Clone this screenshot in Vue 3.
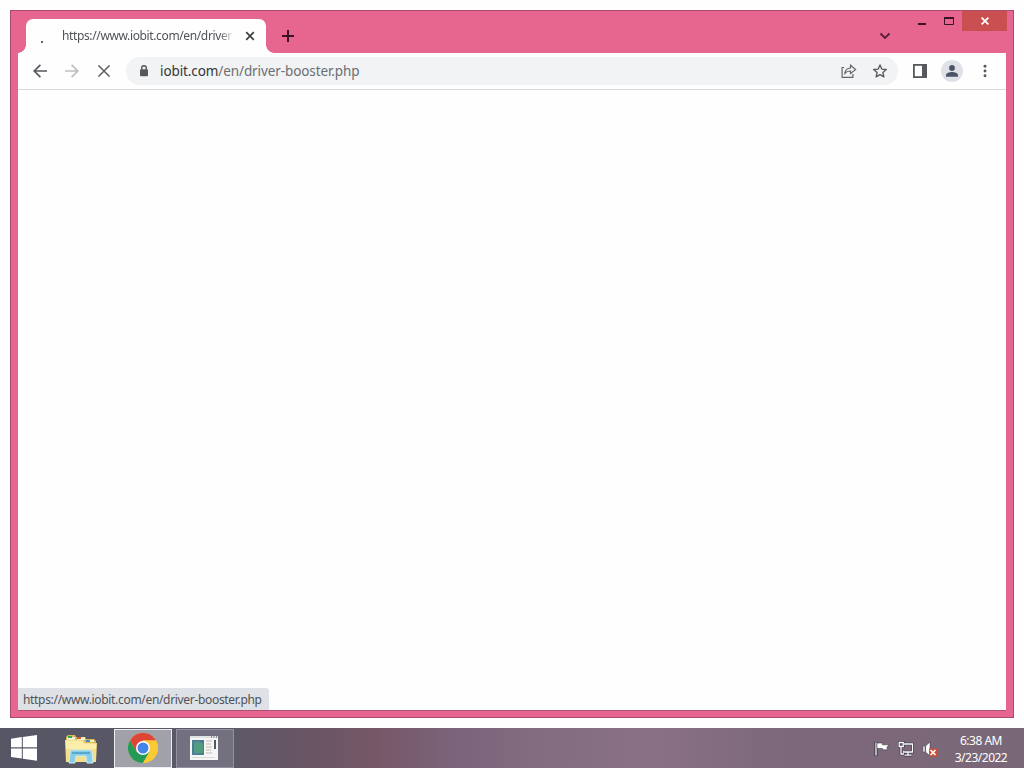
<script setup>
import { ref } from 'vue'

const url = ref('https://www.iobit.com/en/driver-booster.php')
const host = ref('iobit.com')
const path = ref('/en/driver-booster.php')
const time = ref('6:38 AM')
const date = ref('3/23/2022')
</script>

<template>
  <div class="desktop">
    <div class="window">
      <header class="titlebar">
        <div class="tab">
          <span class="throbber"></span>
          <span class="tab-title">{{ url }}</span>
          <svg class="tab-close" width="10" height="10" viewBox="0 0 10 10"><path d="M1.2 1.2l7.6 7.6M8.8 1.2L1.2 8.8" stroke="#3c4043" stroke-width="1.7" /></svg>
        </div>
        <svg class="new-tab" width="12" height="12" viewBox="0 0 12 12"><path d="M6 0v12M0 6h12" stroke="#3a1022" stroke-width="2" /></svg>
        <svg class="tab-search" width="12" height="8" viewBox="0 0 12 8"><path d="M1.5 1.5L6 6l4.5-4.5" fill="none" stroke="#5a1f38" stroke-width="1.9" /></svg>
        <div class="controls">
          <svg class="minimize" width="8" height="2" viewBox="0 0 8 2"><path d="M0 1h8" stroke="#3a1324" stroke-width="2" /></svg>
          <svg class="maximize" width="10" height="8" viewBox="0 0 10 8"><path d="M.5 0v7.5h9V0M0 1h10" fill="none" stroke="#3a1324" /><path d="M0 1h10" stroke="#3a1324" stroke-width="2" /></svg>
          <button class="close">
            <svg width="8" height="8" viewBox="0 0 8 8"><path d="M.6.6l6.8 6.8M7.4.6L.6 7.4" stroke="#fff" stroke-width="1.7" /></svg>
          </button>
        </div>
      </header>

      <div class="client">
        <nav class="toolbar">
          <svg class="back" width="14" height="14" viewBox="0 0 14 14"><path d="M14 7H1.4M7.4.8L1.2 7l6.2 6.2" fill="none" stroke="#55585c" stroke-width="1.7" /></svg>
          <svg class="forward" width="14" height="14" viewBox="0 0 14 14"><path d="M0 7h12.6M6.6.8L12.8 7l-6.2 6.2" fill="none" stroke="#bcbec1" stroke-width="1.7" /></svg>
          <svg class="stop" width="12" height="12" viewBox="0 0 12 12"><path d="M.4.4l11.2 11.2M11.6.4L.4 11.6" stroke="#5a5d61" stroke-width="1.5" /></svg>
          <div class="omnibox">
            <svg class="lock" width="8" height="12" viewBox="0 0 8 12"><path d="M1.7 5V3a2.3 2.3 0 014.6 0v2" fill="none" stroke="#55585c" stroke-width="1.4" /><rect y="4.3" width="8" height="7" rx="1" fill="#55585c" /></svg>
            <span class="address"><b>{{ host }}</b>{{ path }}</span>
            <svg class="share" width="16" height="14" viewBox="0 0 16 14" fill="none" stroke="#62666b" stroke-width="1.2"><path d="M3.2 3.5H1.1v9.8h10.8V10" /><path d="M3.9 9.3C4.2 5.6 6.5 4.2 9.5 4V1.2L14.6 5.5 9.5 9.6V7C7 6.9 5.2 7.6 3.9 9.3z" /></svg>
            <svg class="star" width="14" height="14" viewBox="0 0 14 14"><path d="M7 .9l1.8 4.2 4.5.4-3.4 3 1 4.4L7 10.6l-3.9 2.3 1-4.4-3.4-3 4.5-.4z" fill="none" stroke="#54575b" stroke-width="1.3" stroke-linejoin="round" /></svg>
          </div>
          <svg class="side-panel" width="14" height="14" viewBox="0 0 14 14"><rect x=".9" y=".9" width="12.2" height="12.2" fill="#fff" stroke="#55585c" stroke-width="1.8" /><path d="M9 1h4v12H9z" fill="#55585c" /></svg>
          <svg class="profile" width="22" height="22" viewBox="0 0 22 22"><circle cx="11" cy="11" r="11" fill="#dfe1e8" /><circle cx="11" cy="8" r="2.9" fill="#4c5468" /><path d="M5 16.8v-1.6C5 13 8.5 12 11 12s6 1 6 3.2v1.6z" fill="#4c5468" /></svg>
          <svg class="menu" width="4" height="14" viewBox="0 0 4 14" fill="#55585c"><circle cx="2" cy="2.2" r="1.45" /><circle cx="2" cy="7" r="1.45" /><circle cx="2" cy="11.8" r="1.45" /></svg>
        </nav>
        <main class="page"></main>
        <div class="status"><span>{{ url }}</span></div>
      </div>
    </div>

    <footer class="taskbar">
      <svg class="start" width="26" height="26" viewBox="0 0 26 26" fill="#fff"><path d="M0 3.7l10.8-1.6v10.2H0zM11.8 1.9L26 0v12.3H11.8zM0 13.4h10.8v10.2L0 22zM11.8 13.4H26v12.4l-14.2-2z" /></svg>
      <svg class="explorer" width="34" height="30" viewBox="0 0 34 30">
        <path d="M2 3l2-2h7l1 2h9l1 2h8l2 2v20H2z" fill="#d9b85c" />
        <path d="M3 3h8v3H3zM13 3h8v3h-8zM22 6h8v2h-8z" fill="#f6f0cf" />
        <path d="M4 2h4v2H4z" fill="#35a552" /><path d="M13 3h4v2h-4z" fill="#d9572d" /><path d="M22 6h4v2h-4z" fill="#448bc5" />
        <path d="M1 6h18l2 3h12l-1 19H2z" fill="#f4df8b" />
        <path d="M2 7h16l2 3h12v5H2z" fill="#fbedaa" />
        <path d="M5 29l1-11q0-2 2-2h18q2 0 2 2l1 11h-6l-1-7H12l-1 7z" fill="#8acbe5" stroke="#c9edf6" />
        <path d="M8 19h18" stroke="#57a9ce" stroke-width="2" />
      </svg>
      <div class="task active">
        <svg width="30" height="30" viewBox="0 0 30 30">
          <circle cx="15" cy="15" r="15" fill="#fbc934" />
          <path d="M2 7.5A15 15 0 0128 7.5H15L8.5 18.75z" fill="#df4537" />
          <path d="M2 7.5A15 15 0 0015 30l6.5-11.25H8.5z" fill="#239a56" />
          <path d="M28 7.5H15v7.5l6.5 3.75L15 30A15 15 0 0028 7.5z" fill="#fbc934" />
          <circle cx="15" cy="15" r="7" fill="#fff" /><circle cx="15" cy="15" r="5.5" fill="#4285e8" />
        </svg>
      </div>
      <div class="task docs">
        <svg width="28" height="24" viewBox="0 0 28 24">
          <path d="M0 0h28v24H0z" fill="#f5f7f6" /><path d="M0 0h28v2H0z" fill="#dfe2e3" />
          <path d="M21 1h1M23.5 1h1M26 1h1" stroke="#3a3c45" stroke-width="1.2" />
          <path d="M2 4h12v15H2z" fill="#477d91" /><path d="M4 7q5-3 9 1v9H4z" fill="#519b81" /><path d="M3 6h7M3 17h5" stroke="#6687a5" />
          <path d="M16 5h6M16 8h5M16 11h6M16 14h5M16 17h6" stroke="#c7b4b3" />
          <path d="M24 4h2v9h-2z" fill="#525963" /><path d="M2 21.5h23" stroke="#d5dadb" />
        </svg>
      </div>
      <div class="tray">
        <svg width="16" height="16" viewBox="0 0 16 16"><path d="M2 1v14" stroke="#302b3c" stroke-width="3" /><path d="M2 1.5v13" stroke="#fff" stroke-width="1.3" /><path d="M3 2h5.5v1.8H15l-2.2 2.7 1 2.3H8.5V7.5H3z" fill="#fff" stroke="#40394b" stroke-width=".6" /></svg>
        <svg width="16" height="16" viewBox="0 0 16 16" fill="none"><path d="M6 3h8.5v8H6M3 6v7h4M10 11v3M6.5 14.2h7M1.2 1.5h4v4h-4z" stroke="#302b3c" stroke-width="2.6" /><path d="M6 3h8.5v8H5M3 6v7h3M10 11v3M6.5 14.2h7M1.2 1.5h4v4h-4z" stroke="#fff" stroke-width="1.3" /></svg>
        <svg width="16" height="16" viewBox="0 0 16 16"><path d="M1 5h2v6H1zM3.6 5l4.4-4v14l-4.4-4z" fill="#fff" stroke="#383242" stroke-width=".5" /><path d="M7 7.5h8v8H7z" fill="#ce5037" /><path d="M8.5 9l5 5M13.5 9l-5 5" stroke="#fff" stroke-width="1.6" /></svg>
      </div>
      <div class="clock"><span class="time">{{ time }}</span><span class="date">{{ date }}</span></div>
    </footer>
  </div>
</template>

<style>
html, body { margin: 0; overflow: hidden; }
</style>

<style scoped>
* { box-sizing: border-box; }
svg { display: block; flex: none; }
.desktop { width: 1024px; height: 768px; display: flex; flex-direction: column; background: #fefefe; font-family: "Noto Sans", "Open Sans", sans-serif; font-size: 12px; }
.window { width: 1004px; height: 708px; margin: 10px; flex: none; display: flex; flex-direction: column; background: #e66690; border: 1px solid #a94d70; }
.titlebar { height: 42px; display: flex; align-items: flex-start; padding-left: 15px; flex: none; }
.tab { position: relative; width: 240px; height: 34px; margin-top: 8px; display: flex; align-items: center; background: #fefefe; border-radius: 7px 7px 0 0; }
.tab::before, .tab::after { content: ""; position: absolute; bottom: 0; width: 8px; height: 8px; }
.tab::before { left: -8px; background: radial-gradient(circle at 0 0, transparent 7.5px, #fefefe 8px); }
.tab::after { right: -8px; background: radial-gradient(circle at 100% 0, transparent 7.5px, #fefefe 8px); }
.throbber { width: 2px; height: 2px; margin: 12px 19px 0 15px; background: #62666a; }
.tab-title { width: 171px; overflow: hidden; white-space: nowrap; color: #505357; letter-spacing: -.37px; line-height: 18px; mask-image: linear-gradient(90deg, #000 158px, transparent 172px); }
.tab-close { margin-left: 12px; }
.new-tab { margin: 19px 0 0 16px; }
.tab-search { margin: 21px 0 0 585px; }
.controls { display: flex; margin-left: auto; padding-right: 6px; }
.minimize { margin-top: 12px; }
.maximize { margin: 6px 8px 0 18px; }
.close { width: 45px; height: 20px; padding: 0; border: 0; display: flex; align-items: center; justify-content: center; background: #c94f50; }
.client { width: 988px; height: 657px; margin-left: 7px; display: flex; flex-direction: column; background: #fefefe; box-shadow: 0 1px #ae5274; }
.toolbar { height: 37px; flex: none; display: flex; align-items: center; padding-left: 15px; border-bottom: 1px solid #d9dadd; }
.forward { margin-left: 18px; }
.stop { margin-left: 19px; }
.omnibox { width: 772px; height: 28px; margin-left: 16px; padding-left: 14px; display: flex; align-items: center; border-radius: 14px; background: #f1f3f4; }
.address { margin-left: 12px; color: #6b6f73; font-size: 13.5px; line-height: 20px; letter-spacing: -.1px; white-space: nowrap; }
.address b { color: #34363a; font-weight: 400; }
.share { margin-left: auto; margin-right: 16px; }
.star { margin-right: 11px; }
.side-panel { margin-left: 15px; }
.profile { margin-left: 14px; }
.menu { margin-left: 20px; }
.page { flex: 1; }
.status { width: 251px; height: 22px; display: flex; align-items: center; padding: 1px 0 0 5px; background: #dee1e6; border-radius: 0 3px 0 0; color: #505357; letter-spacing: -.32px; white-space: nowrap; }
.taskbar { height: 40px; flex: none; display: flex; align-items: center; background: linear-gradient(90deg, #555564 0, #5c5967 230px, #685565 300px, #765766 375px, #7b637a 450px, #836c80 540px, #8b7185 650px, #7e697c 760px, #796777 1024px); }
.start { margin-left: 11px; }
.explorer { margin: 2px 0 0 27px; }
.task { width: 58px; height: 39px; display: flex; align-items: center; justify-content: center; margin-left: 4px; border: 1px solid #9492a0; background: #737080; }
.task.active { margin-left: 16px; border-color: #eeeef2; background: #a1a1aa; }
.docs { padding-right: 2px; }
.tray { display: flex; gap: 8px; margin: 1px 0 0 auto; }
.clock { width: 86px; height: 34px; margin-top: 2px; display: flex; flex-direction: column; align-items: center; color: #fff; line-height: 17px; }
.clock span { letter-spacing: -.5px; }
</style>
